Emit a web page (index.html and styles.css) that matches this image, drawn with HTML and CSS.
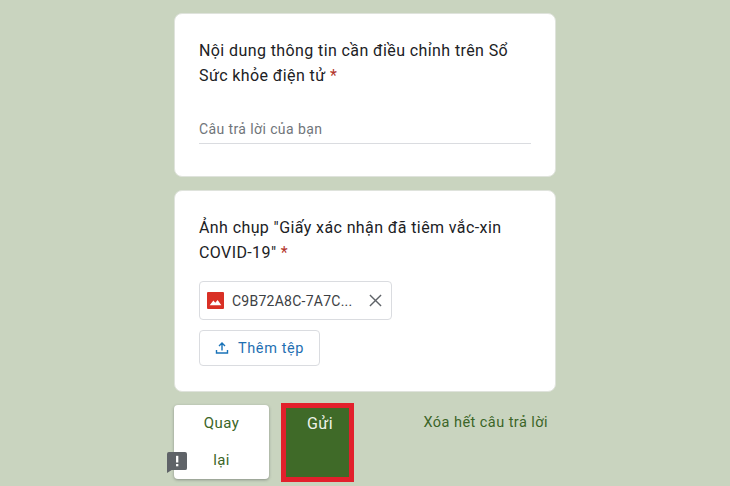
FILE: index.html
```html
<!DOCTYPE html>
<html lang="vi">
<head>
<meta charset="utf-8">
<title>Biểu mẫu</title>
<link rel="stylesheet" href="styles.css">
</head>
<body>
<main class="form">
  <section class="card card-text">
    <h2 class="question">Nội dung thông tin cần điều chỉnh trên Sổ Sức khỏe điện tử <span class="req">*</span></h2>
    <div class="answer">Câu trả lời của bạn</div>
  </section>
  <section class="card card-upload">
    <h2 class="question">Ảnh chụp "Giấy xác nhận đã tiêm vắc-xin COVID-19" <span class="req">*</span></h2>
    <div class="file">
      <svg class="file-icon" viewBox="0 0 16 16"><rect width="16" height="16" rx="1" fill="#d93025"/><path d="M2.5 12.5 6 8l1.8 2.2L10 7.5l3.5 5z" fill="#fff"/></svg>
      <span class="file-name">C9B72A8C-7A7C...</span>
      <svg class="file-x" viewBox="0 0 14 14"><path d="M1 1l12 12M13 1L1 13" stroke="#5f6368" stroke-width="1.5" fill="none"/></svg>
    </div>
    <div class="add">
      <svg class="add-icon" viewBox="0 0 14 14"><path d="M7 9.5V2.2M4 5l3-3 3 3M1.5 9v3h11V9" stroke="#1a73b8" stroke-width="1.4" fill="none"/></svg>
      <span>Thêm tệp</span>
    </div>
  </section>
  <div class="actions">
    <div class="back">
      <span>Quay</span><span>lại</span>
      <svg class="feedback" viewBox="0 0 21 22"><path d="M2 0h17a2 2 0 0 1 2 2v15a2 2 0 0 1-2 2H5l-5 3V2a2 2 0 0 1 2-2z" fill="#5f6368"/><rect x="9.5" y="4" width="2.4" height="7" fill="#fff"/><rect x="9.5" y="12.6" width="2.4" height="2.4" fill="#fff"/></svg>
    </div>
    <div class="send-frame"><div class="send">Gửi</div></div>
    <div class="clear">Xóa hết câu trả lời</div>
  </div>
</main>
</body>
</html>
```
FILE: styles.css
```css
* { box-sizing: border-box; }
html, body { height: 100%; }
body {
  margin: 0;
  background: #c9d4bf;
  font-family: Roboto, "Noto Sans", sans-serif;
  overflow: hidden;
}
.form {
  width: 382px;
  margin: 0 auto;
  padding-top: 13px;
  display: flex;
  flex-direction: column;
  gap: 13px;
}
.card {
  background: #fff;
  border: 1px solid #dfe3dc;
  border-radius: 8px;
  padding: 24px 24px 0;
}
.card-text { height: 164px; }
.card-upload { height: 202px; }
.question {
  margin: 0;
  font-size: 16px;
  font-weight: 400;
  line-height: 25px;
  letter-spacing: 0.4px;
  color: #202124;
}
.req { color: #b3352b; }
.answer {
  margin-top: 31px;
  padding-bottom: 4px;
  border-bottom: 1px solid #dadce0;
  font-size: 14px;
  line-height: 20px;
  letter-spacing: 0.4px;
  color: #70757a;
}
.file {
  margin-top: 16px;
  width: 193px;
  height: 39px;
  border: 1px solid #dadce0;
  border-radius: 4px;
  display: flex;
  align-items: center;
  padding-left: 7px;
  font-size: 14px;
  letter-spacing: 0.25px;
  color: #3c4043;
}
.file-icon { width: 17px; height: 17px; flex: none; }
.file-name { margin-left: 8px; white-space: nowrap; }
.file-x { width: 13px; height: 13px; flex: none; margin-left: auto; margin-right: 9px; }
.add {
  margin-top: 10px;
  width: 121px;
  height: 36px;
  border: 1px solid #dadce0;
  border-radius: 4px;
  display: flex;
  align-items: center;
  padding-left: 15px;
  gap: 9px;
  font-size: 14.5px;
  font-weight: 400;
  letter-spacing: 0.6px;
  color: #1f6fb2;
}
.add-icon { width: 14px; height: 14px; flex: none; }
.actions {
  display: flex;
  align-items: flex-start;
  font-size: 15px;
  letter-spacing: 0.4px;
  height: 77px;
}
.back {
  position: relative;
  width: 95px;
  height: 74px;
  background: #fff;
  border-radius: 4px;
  box-shadow: 0 1px 3px rgba(60, 64, 67, 0.45);
  color: #3b6527;
  display: flex;
  flex-direction: column;
  align-items: center;
  padding-top: 8px;
  gap: 17px;
  line-height: 20px;
}
.feedback {
  position: absolute;
  left: -7px;
  top: 47px;
  width: 20px;
  height: 21px;
}
.send-frame {
  margin: -2px 0 0 12px;
  width: 73px;
  height: 79px;
  border: 5px solid #e2202c;
  flex: none;
}
.send {
  height: 100%;
  background: #3f6a28;
  color: #eef2ea;
  text-align: center;
  font-size: 16px;
  line-height: 20px;
  padding: 6px 0 0 5px;
}
.clear {
  margin-left: auto;
  margin-right: 8px;
  padding-top: 8px;
  font-size: 14.5px;
  letter-spacing: 0.45px;
  line-height: 20px;
  color: #3b6527;
  white-space: nowrap;
}
```
